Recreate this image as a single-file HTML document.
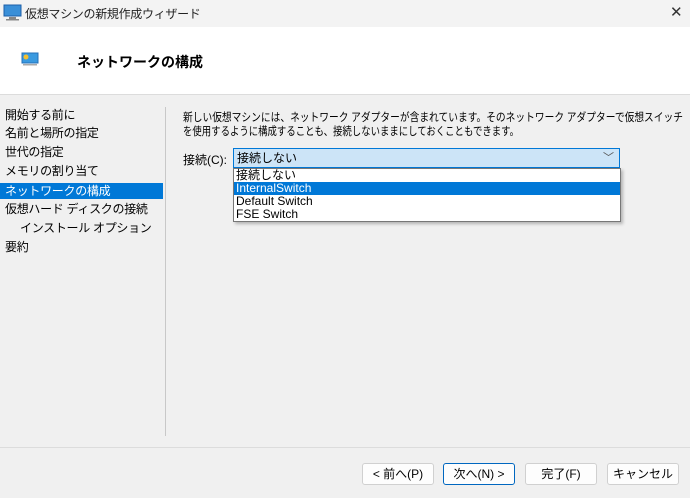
<!DOCTYPE html>
<html><head><meta charset="utf-8"><style>
*{margin:0;padding:0;box-sizing:border-box}
body{width:690px;height:498px;background:#f0f0f0;font-family:"Liberation Sans","Noto Sans CJK JP",sans-serif;font-size:12px;color:#000;position:relative;overflow:hidden}
.abs{position:absolute}
.title{left:0;top:0;width:690px;height:27px;background:#f3f3f3}
.hdr{left:0;top:27px;width:690px;height:68px;background:#fff;border-bottom:1px solid #dcdcdc}
.nav div{position:absolute;left:0;width:163px;height:16px;line-height:16px;padding-left:5px;white-space:nowrap;letter-spacing:-0.3px}
.btn{position:absolute;top:463px;height:22px;background:#fdfdfd;border:1px solid #d0d0d0;border-radius:3px;text-align:center;line-height:20px;font-size:12px}
</style></head><body>
<div class="abs title">
 <svg class="abs" style="left:3px;top:4px" width="20" height="17"><rect x="1" y="1" width="17" height="11" fill="#3a8fd8" stroke="#1c5fa8"/><rect x="6" y="13" width="7" height="2" fill="#888"/><rect x="3" y="15" width="13" height="1.5" fill="#888"/></svg>
 <div class="abs" style="left:25px;top:5px;font-size:12px;color:#222;letter-spacing:-0.3px">仮想マシンの新規作成ウィザード</div>
 <div class="abs" style="left:670px;top:3px;font-size:15px;color:#333">✕</div>
</div>
<div class="abs hdr">
 <svg class="abs" style="left:21px;top:25px" width="18" height="15"><rect x="1" y="1" width="16" height="10" fill="#3a9ae0" stroke="#2470b8"/><circle cx="5" cy="5" r="2.5" fill="#f5c030"/><rect x="2" y="12" width="14" height="1.5" fill="#aaa"/></svg>
 <div class="abs" style="left:77px;top:25px;font-size:14px;font-weight:bold">ネットワークの構成</div>
</div>
<div class="nav">
 <div style="top:107px">開始する前に</div>
 <div style="top:125px">名前と場所の指定</div>
 <div style="top:144px">世代の指定</div>
 <div style="top:163px">メモリの割り当て</div>
 <div style="top:183px;background:#0078d7;color:#fff">ネットワークの構成</div>
 <div style="top:201px">仮想ハード ディスクの接続</div>
 <div style="top:220px;padding-left:20px">インストール オプション</div>
 <div style="top:239px">要約</div>
</div>
<div class="abs" style="left:165px;top:107px;width:1px;height:329px;background:#c8c8c8"></div>
<svg class="abs" style="left:183px;top:110px" width="505" height="30" font-family="Liberation Sans, Noto Sans CJK JP, sans-serif" font-size="11.5">
 <text x="0" y="11" textLength="500" lengthAdjust="spacingAndGlyphs">新しい仮想マシンには、ネットワーク アダプターが含まれています。そのネットワーク アダプターで仮想スイッチ</text>
 <text x="0" y="25" textLength="336" lengthAdjust="spacingAndGlyphs">を使用するように構成することも、接続しないままにしておくこともできます。</text>
</svg>
<div class="abs" style="left:183px;top:151px">接続(C):</div>
<div class="abs" style="left:233px;top:148px;width:387px;height:20px;background:#cce4f7;border:1px solid #0078d7;line-height:18px;padding-left:3px">接続しない<span class="abs" style="right:5px;top:0;color:#555;font-size:11px">﹀</span></div>
<div class="abs" style="left:233px;top:168px;width:388px;height:54px;background:#fff;border:1px solid #777;box-shadow:2px 2px 3px rgba(0,0,0,.25);line-height:13px">
 <div style="padding-left:2px">接続しない</div>
 <div style="padding-left:2px;background:#0078d7;color:#fff">InternalSwitch</div>
 <div style="padding-left:2px">Default Switch</div>
 <div style="padding-left:2px">FSE Switch</div>
</div>
<div class="abs" style="left:0;top:447px;width:690px;height:1px;background:#dcdcdc"></div>
<div class="btn" style="left:362px;width:72px">&lt; 前へ(P)</div>
<div class="btn" style="left:443px;width:72px;border:1px solid #0067c0">次へ(N) &gt;</div>
<div class="btn" style="left:525px;width:72px">完了(F)</div>
<div class="btn" style="left:607px;width:72px">キャンセル</div>
</body></html>
